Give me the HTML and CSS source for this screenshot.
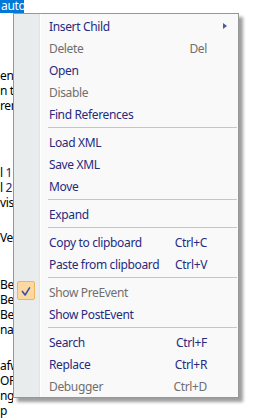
FILE: index.html
```html
<!DOCTYPE html>
<html>
<head>
<meta charset="utf-8">
<link rel="stylesheet" href="styles.css">
</head>
<body>
<div class="bg">
  <div class="sel">auto</div>
  <div class="sp sp55"></div>
  <div class="ln">en <span class="or">I</span></div>
  <div class="ln">n th</div>
  <div class="ln">ren</div>
  <div class="sp sp52"></div>
  <div class="ln">l <span class="nv">1</span></div>
  <div class="ln">l <span class="nv">2</span></div>
  <div class="ln">visi</div>
  <div class="sp sp20"></div>
  <div class="ln">Ve</div>
  <div class="sp sp32"></div>
  <div class="ln">Ber</div>
  <div class="ln">Ber</div>
  <div class="ln">Ber</div>
  <div class="ln">na</div>
  <div class="sp sp21"></div>
  <div class="ln">afw</div>
  <div class="ln">OR</div>
  <div class="ln">nge</div>
  <div class="ln">p</div>
</div>

<div class="menu">
  <div class="item"><span class="label">Insert Child</span><span class="key"></span><span class="sub"><span class="arrow"></span></span></div>
  <div class="item dis"><span class="label">Delete</span><span class="key">Del</span><span class="sub"></span></div>
  <div class="item"><span class="label">Open</span><span class="key"></span><span class="sub"></span></div>
  <div class="item dis"><span class="label">Disable</span><span class="key"></span><span class="sub"></span></div>
  <div class="item"><span class="label">Find References</span><span class="key"></span><span class="sub"></span></div>
  <div class="sep"></div>
  <div class="item"><span class="label">Load XML</span><span class="key"></span><span class="sub"></span></div>
  <div class="item"><span class="label">Save XML</span><span class="key"></span><span class="sub"></span></div>
  <div class="item"><span class="label">Move</span><span class="key"></span><span class="sub"></span></div>
  <div class="sep"></div>
  <div class="item"><span class="label">Expand</span><span class="key"></span><span class="sub"></span></div>
  <div class="sep"></div>
  <div class="item"><span class="label">Copy to clipboard</span><span class="key">Ctrl+C</span><span class="sub"></span></div>
  <div class="item"><span class="label">Paste from clipboard</span><span class="key">Ctrl+V</span><span class="sub"></span></div>
  <div class="sep"></div>
  <div class="item dis checked">
    <span class="check"><svg width="18" height="18" viewBox="0 0 18 18"><path d="M5 9.5 L8 13.5 L13 5.5" fill="none" stroke="#3b4fa6" stroke-width="1.8" stroke-linecap="round" stroke-linejoin="round"/></svg></span>
    <span class="label">Show PreEvent</span><span class="key"></span><span class="sub"></span></div>
  <div class="item"><span class="label">Show PostEvent</span><span class="key"></span><span class="sub"></span></div>
  <div class="sep"></div>
  <div class="item"><span class="label">Search</span><span class="key">Ctrl+F</span><span class="sub"></span></div>
  <div class="item"><span class="label">Replace</span><span class="key">Ctrl+R</span><span class="sub"></span></div>
  <div class="item dis"><span class="label">Debugger</span><span class="key">Ctrl+D</span><span class="sub"></span></div>
</div>
</body>
</html>
```
FILE: styles.css
```css
html, body {
  margin: 0;
  padding: 0;
  background: #ffffff;
}
body {
  width: 262px;
  height: 418px;
  overflow: hidden;
  position: relative;
  font-family: "Noto Sans", "Liberation Sans", sans-serif;
  font-size: 12px;
  letter-spacing: -0.35px;
}
.bg {
  display: flex;
  flex-direction: column;
  color: #000;
}
.sel {
  width: 24px;
  height: 13px;
  line-height: 12px;
  background: #0078d7;
  color: #fff;
  padding-left: 1px;
  box-sizing: border-box;
  white-space: nowrap;
}
.ln {
  width: 13px;
  height: 15px;
  line-height: 15px;
  white-space: nowrap;
  overflow: hidden;
}
.or { color: #e8a020; }
.nv { color: #1a1a80; }
.sp55 { height: 55px; }
.sp52 { height: 52px; }
.sp20 { height: 20px; }
.sp32 { height: 32px; }
.sp21 { height: 21px; }

.menu {
  position: absolute;
  left: 13px;
  top: 13px;
  width: 226px;
  box-sizing: border-box;
  border: 1px solid #979797;
  padding: 0 0 1px 0;
  background: linear-gradient(to right, #e9eced 0, #e9eced 25px, #e2e3e3 25px, #e2e3e3 26px, #ffffff 26px, #ffffff 27px, #f9f9f9 27px);
  box-shadow: 4px 4px 3px rgba(0, 0, 0, 0.38);
  color: #262b80;
}
.item {
  position: relative;
  display: grid;
  grid-template-columns: 1fr auto 31px;
  align-items: center;
  height: 22px;
  box-sizing: border-box;
  padding-top: 4px;
  line-height: 18px;
  padding-left: 35px;
  white-space: nowrap;
}
.item.dis { color: #6f6f6f; }
.key { text-align: right; }
.sub {
  display: flex;
  align-items: center;
  height: 18px;
  padding-left: 16px;
}
.arrow {
  width: 0;
  height: 0;
  margin-top: -3px;
  border-top: 3.5px solid transparent;
  border-bottom: 3.5px solid transparent;
  border-left: 4px solid #4b5a9c;
}
.sep {
  height: 6px;
  margin: 0 1px 0 34px;
  display: flex;
  align-items: center;
}
.sep::before {
  content: "";
  display: block;
  width: 100%;
  height: 1px;
  background: #c6c6c6;
}
.check {
  position: absolute;
  left: 3px;
  top: 1px;
  width: 18px;
  height: 19px;
  box-sizing: border-box;
  border: 1px solid #f0b45c;
  border-radius: 2px;
  background: #fdd9a2;
  display: flex;
  align-items: center;
  justify-content: center;
}
.check svg { display: block; }
```
